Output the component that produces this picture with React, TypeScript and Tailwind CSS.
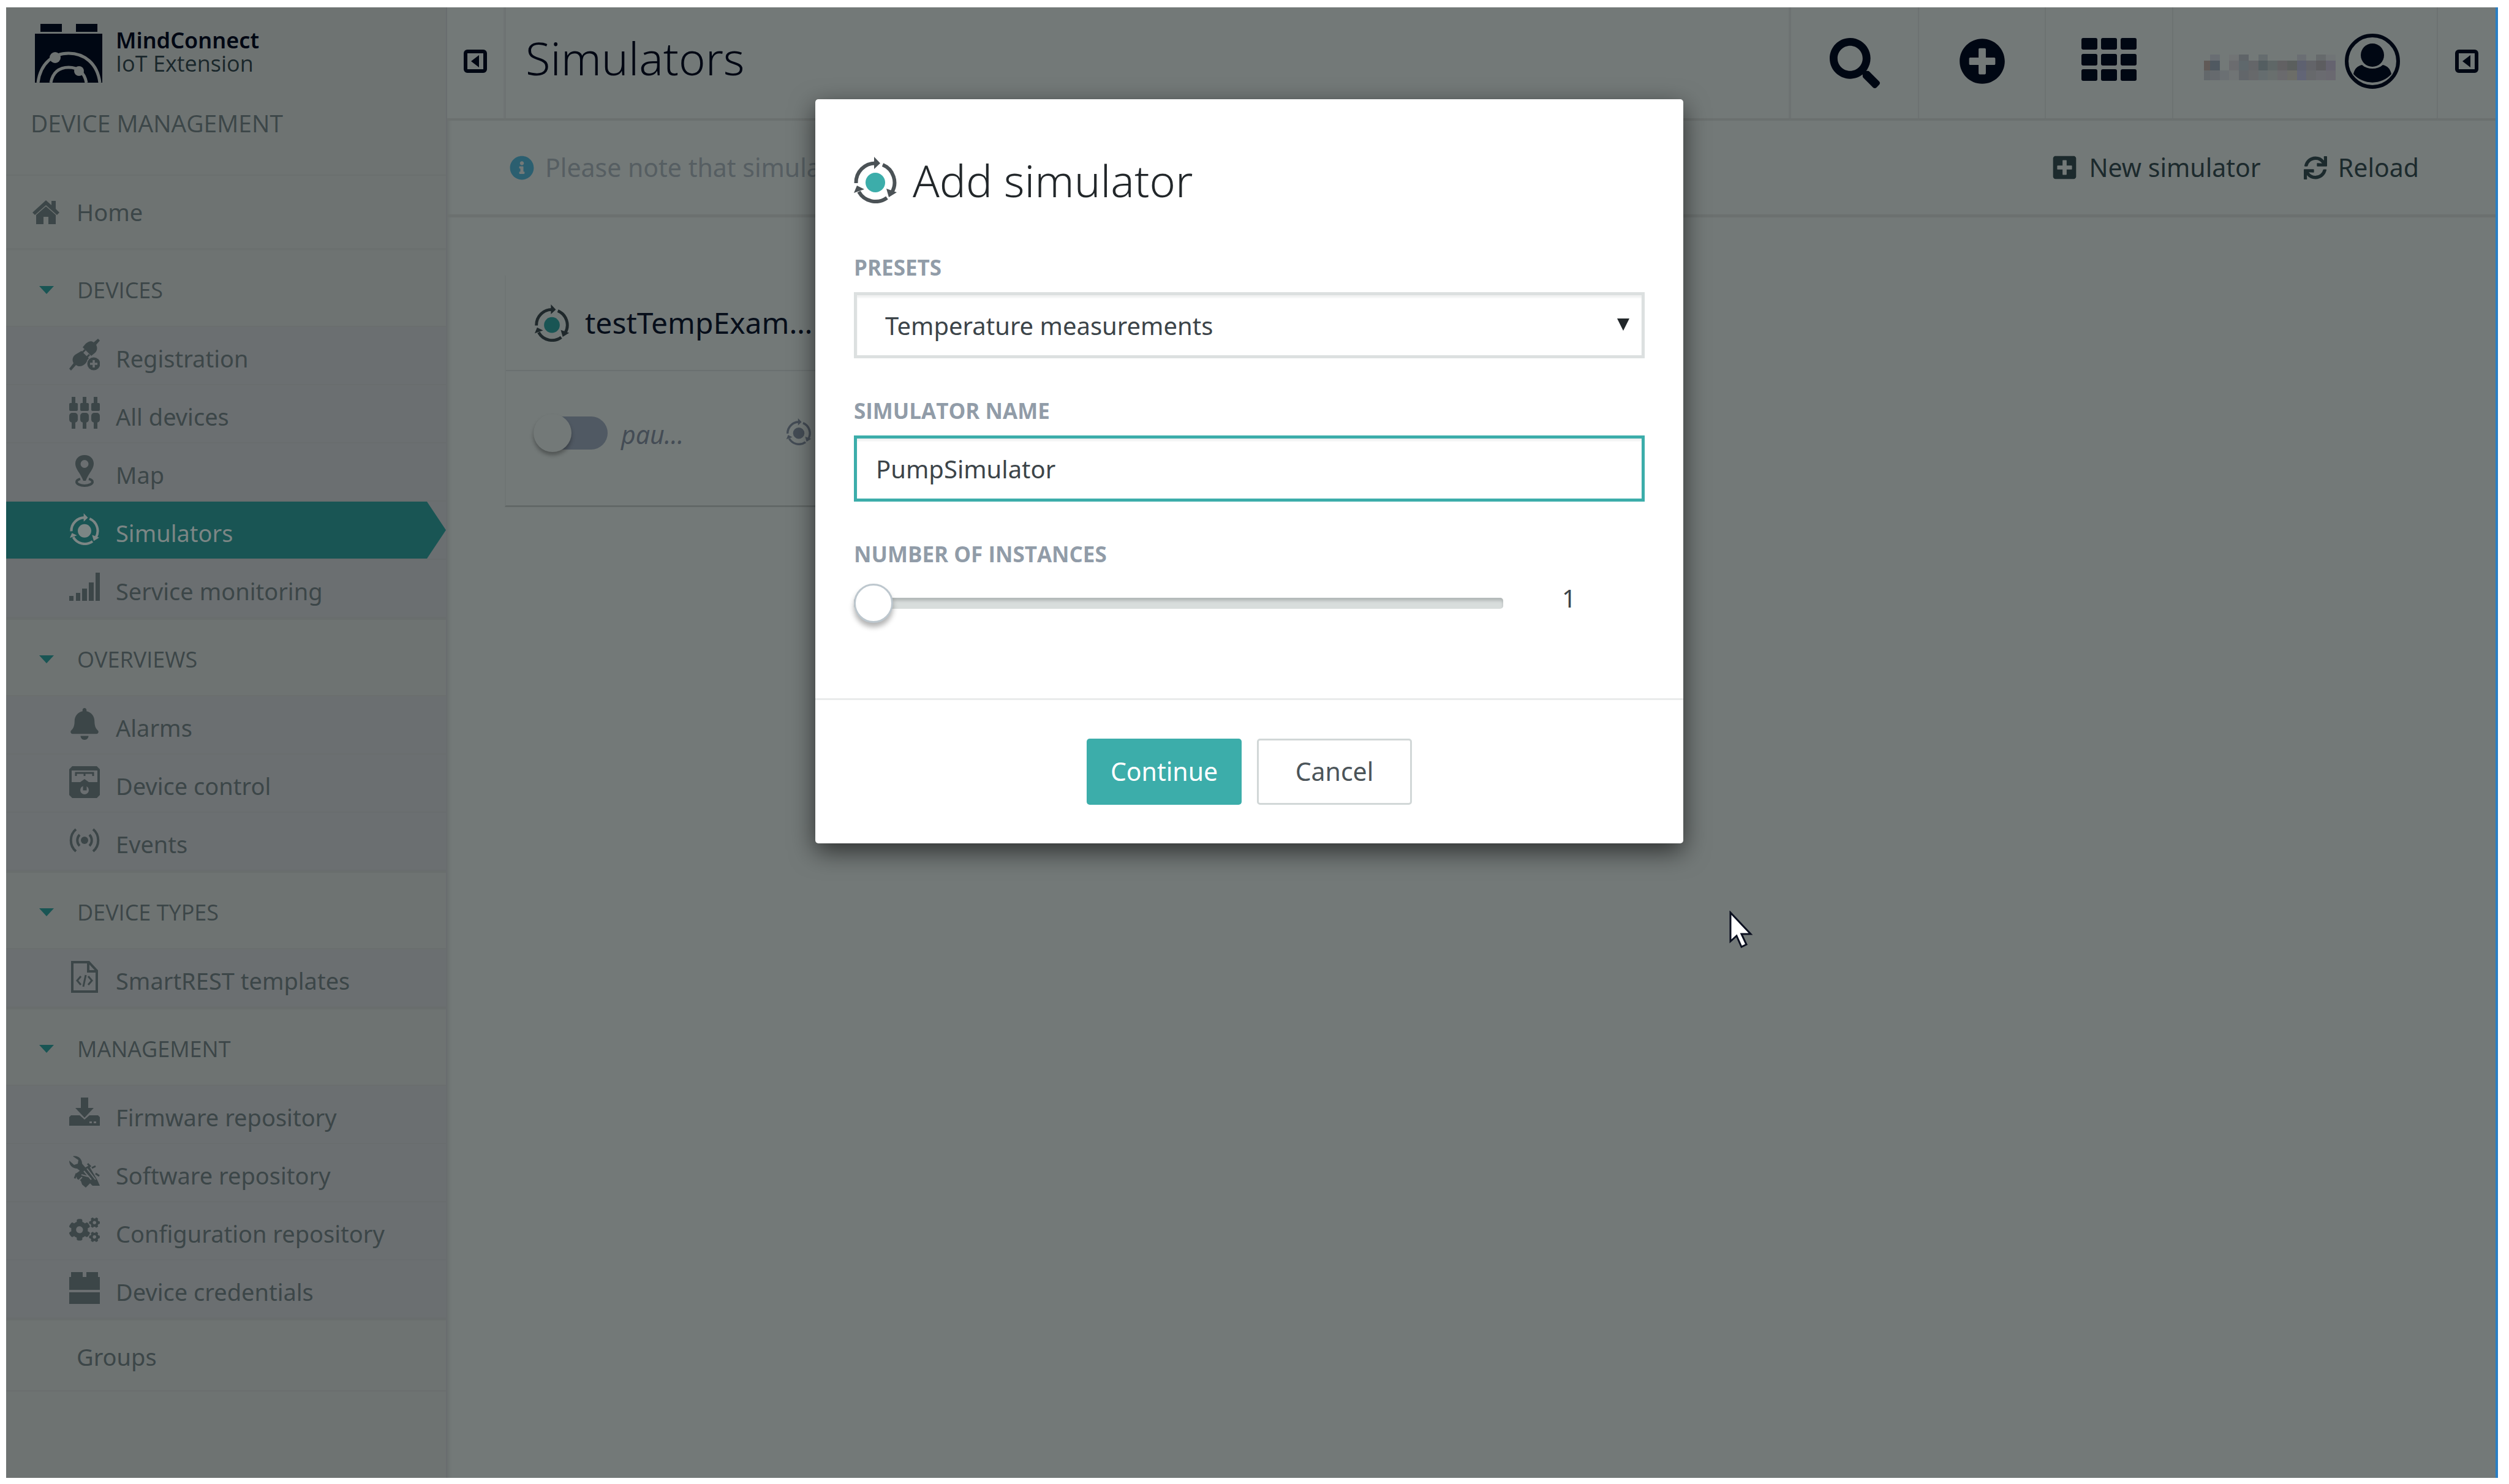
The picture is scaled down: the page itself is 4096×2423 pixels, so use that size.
import type { ReactNode } from "react";
import { FaBell, FaCogs, FaInfoCircle, FaPlusCircle, FaPlusSquare, FaSearch, FaSync } from "react-icons/fa";

type IconProps = { className?: string; dot?: string };

function SimulatorIcon({ className, dot = "currentColor" }: IconProps) {
  return (
    <svg viewBox="0 0 70 76" className={className} fill="none" aria-hidden="true">
      <g stroke="currentColor" strokeWidth="6">
        <path d="M3.5 43A31.500 31.500 0 0 1 36 10.500" />
        <path d="M47 13A31.500 31.500 0 0 1 62 58" />
        <path d="M54 67A31.500 31.500 0 0 1 8 57" />
      </g>
      <g fill="currentColor">
        <path d="M33 0L43 10.500L33 20Z" />
        <path d="M53 52L70 58L57 66Z" />
        <path d="M0 59L5 47L17 53Z" />
      </g>
      <circle cx="35" cy="42" r="16" fill={dot} />
    </svg>
  );
}

function HomeIcon() {
  return (
    <svg viewBox="0 0 46 40" className="h-10 w-[46px]" fill="currentColor" aria-hidden="true">
      <path d="M23 1L1 21l4 4L23 9l18 16 4-4-6-6V2h-7v7z" />
      <path d="M23 11L7 25v15h12V28h8v12h12V25z" />
    </svg>
  );
}

function RegistrationIcon() {
  return (
    <svg viewBox="0 0 50 52" className="size-full" fill="currentColor" aria-hidden="true">
      <path d="M47 0l3 3-6 7c3 6 1 11-3 14l-5 4L22 14l5-6c5-4 9-5 13-2z" />
      <path d="M20 20l13 13-7 8c-5 5-11 5-15 2l-8 9-3-3 7-9c-3-6-1-11 3-14z" />
      <path d="M20 24l6-6m1 14l6-6" stroke="currentColor" strokeWidth="3" />
      <circle cx="40" cy="41" r="12" fill="#6b6f71" />
      <circle cx="40" cy="41" r="10.500" />
      <path d="M40 35v12m-6-6h12" stroke="#6b6f71" strokeWidth="3.500" />
    </svg>
  );
}

function DevicesIcon() {
  return (
    <svg viewBox="0 0 50 52" className="size-full" fill="currentColor" aria-hidden="true">
      {[0, 18, 36].map((x) => (
        <g key={x}>
          <rect x={x + 4} width="6" height="12" />
          <rect x={x} y="10" width="14" height="13" rx="2" />
          <rect x={x} y="26" width="14" height="16" rx="5" />
          <rect x={x + 4} y="40" width="6" height="12" />
        </g>
      ))}
    </svg>
  );
}

function MapIcon() {
  return (
    <svg viewBox="0 0 50 52" className="size-full" fill="currentColor" aria-hidden="true">
      <path
        fillRule="evenodd"
        d="M25 0C16 0 10 6 10 14c0 9 8 15 13 28h4c5-13 13-19 13-28C40 6 34 0 25 0zm0 8a6 6 0 1 1 0 13a6 6 0 1 1 0-13z"
      />
      <path d="M18 39c-4 1-6 3-6 5 0 3 6 6 13 6s13-3 13-6c0-2-2-4-6-5" fill="none" stroke="currentColor" strokeWidth="4" />
    </svg>
  );
}

function SignalIcon() {
  return (
    <svg viewBox="0 0 50 52" className="size-full" fill="currentColor" aria-hidden="true">
      <rect y="40" width="7" height="8" />
      <rect x="11" y="35" width="7" height="13" />
      <rect x="21" y="28" width="8" height="20" />
      <rect x="32" y="18" width="8" height="30" />
      <rect x="43" y="2" width="7" height="46" />
    </svg>
  );
}

function ControlIcon() {
  return (
    <svg viewBox="0 0 50 52" className="size-full" fill="currentColor" aria-hidden="true">
      <path
        fillRule="evenodd"
        d="M5 0h40l5 5v42l-5 5H5l-5-5V5zM4 7v19h14l7-5 7 5h14V7zM25 32a7 7 0 1 0 0 14a7 7 0 1 0 0-14z"
      />
      <path d="M11 16v-5h28v5M25 11v5M24 30h3v8h-3z" fill="none" stroke="currentColor" strokeWidth="3" />
    </svg>
  );
}

function EventsIcon() {
  return (
    <svg viewBox="0 0 50 52" className="size-full" fill="none" stroke="currentColor" strokeWidth="4" aria-hidden="true">
      <circle cx="25" cy="26" r="6" fill="currentColor" stroke="none" />
      <path d="M17 17c-5 5-5 13 0 18M33 17c5 5 5 13 0 18M11 8C0 17 0 35 11 44M39 8c11 9 11 27 0 36" />
    </svg>
  );
}

function TemplateIcon() {
  return (
    <svg viewBox="0 0 50 52" className="size-full" fill="none" stroke="currentColor" strokeWidth="4" aria-hidden="true">
      <path d="M5 2h27l13 14v34H5zM31 2v15h14" />
      <path d="M19 25l-6 7 6 7M31 25l6 7-6 7M27 23l-4 19" strokeWidth="3" />
    </svg>
  );
}

function DownloadIcon() {
  return (
    <svg viewBox="0 0 50 52" className="size-full" fill="currentColor" aria-hidden="true">
      <path d="M19 0h12v17h9L25 33 10 17h9z" />
      <path fillRule="evenodd" d="M3 29h14l8 7 8-7h14l3 3v14H0V32zM33 39v3h4v-3zm7 0v3h4v-3z" />
    </svg>
  );
}

function SoftwareIcon() {
  return (
    <svg viewBox="0 0 50 52" className="size-full" fill="currentColor" aria-hidden="true">
      <path d="M6 1c8-2 15 4 15 12l6 7-8 6-6-5C6 21 0 16 0 8l8 7 6-2 1-6z" />
      <path d="M18 24l14-8 14 24 4 9H38l-4-4-7 7-6-5-2-6-6-3-3-8z" />
      <path d="M24 25l12 14M29 21l14 18M20 31l11 3M16 40l5-5" stroke="#6b6f71" strokeWidth="2" />
      <path d="M30 13l5 5M37 20l6-3M43 29l6 4M12 29l-3 8" stroke="currentColor" strokeWidth="3" />
    </svg>
  );
}

function CredentialsIcon() {
  return (
    <svg viewBox="0 0 50 52" className="size-full" fill="currentColor" aria-hidden="true">
      <path d="M3 0h19v8h6V0h19v8h3v21H0V8h3zM0 33h50v19H0z" />
    </svg>
  );
}

function PanelToggleIcon() {
  return (
    <svg viewBox="0 0 38 38" className="size-[38px]" aria-hidden="true">
      <rect x="3" y="3" width="32" height="32" rx="3" fill="none" stroke="currentColor" strokeWidth="6" />
      <path d="M25 9v20L12 19z" fill="currentColor" />
    </svg>
  );
}

function GridIcon() {
  return (
    <svg viewBox="0 0 90 70" className="h-[70px] w-[90px]" fill="currentColor" aria-hidden="true">
      {[0, 26, 51].map((y) => [0, 32, 64].map((x) => <rect key={x + "-" + y} x={x} y={y} width="26" height="19" rx="3" />))}
    </svg>
  );
}

function UserIcon() {
  return (
    <svg viewBox="0 0 90 90" className="size-[90px]" aria-hidden="true">
      <circle cx="45" cy="45" r="42" fill="none" stroke="currentColor" strokeWidth="6" />
      <ellipse cx="45" cy="35" rx="19" ry="19" fill="currentColor" />
      <path d="M28 51c9 8 25 8 34 0 8 2 12 6 14 15a42 42 0 0 1-62 0c2-9 6-13 14-15z" fill="currentColor" />
    </svg>
  );
}

const mosaicRows: { y: number; h: number; colors: string[] }[] = [
  {
    y: 0,
    h: 10,
    colors: ["", "#696e73", "", "#717475", "#5f6468", "", "#656c6e", "", "", "", "#6a6e73", "", "#666a6c", "#707476"],
  },
  {
    y: 10,
    h: 16,
    colors: [
      "#615a57", "#505961", "", "#6b6c6f", "#5f686c", "#646669", "#545e61", "#5f6767",
      "#626163", "#5b5f5e", "#5e6170", "#636469", "#5d5d60", "#65636f",
    ],
  },
  {
    y: 26,
    h: 16,
    colors: [
      "#63686b", "#666a6e", "#6b7073", "#707475", "#62666a", "#67696b", "#656d6f", "#696f6e",
      "#6a6a6d", "#6c6d68", "#626576", "#67696c", "#6a6b70", "#6a6970",
    ],
  },
];
const mosaicX = [0, 10, 26, 41, 57, 73, 89, 104, 120, 136, 152, 167, 183, 199, 215];

function MaskedName() {
  return (
    <svg viewBox="0 0 216 42" className="mt-3 h-[42px] w-[216px]" shapeRendering="crispEdges" aria-hidden="true">
      {mosaicRows.map((row) =>
        row.colors.map((c, i) =>
          c ? (
            <rect key={row.y + "-" + i} x={mosaicX[i]} y={row.y} width={mosaicX[i + 1] - mosaicX[i]} height={row.h} fill={c} />
          ) : null,
        ),
      )}
    </svg>
  );
}

function Logo() {
  return (
    <svg viewBox="0 0 110 96" className="h-24 w-[110px]" aria-hidden="true">
      <path d="M9 0h35v13H9zM67 0h35v13H67zM0 16h110v80H0z" fill="#000713" />
      <g fill="none" stroke="#6e7372" strokeWidth="5">
        <path d="M5 96C9 64 30 48 55 48s47 16 51 48" />
        <path d="M26 96c3-16 13-25 29-25s26 9 29 25" />
      </g>
      <circle cx="33" cy="55" r="9" fill="#6e7372" />
      <circle cx="72" cy="77" r="8" fill="#6e7372" />
      <path d="M35 96c2-10 9-15 20-15s18 5 21 15z" fill="#000713" />
    </svg>
  );
}

type Item = { label: string; icon: ReactNode; active?: boolean };

const sections: { title: string; items: Item[] }[] = [
  {
    title: "DEVICES",
    items: [
      { label: "Registration", icon: <RegistrationIcon /> },
      { label: "All devices", icon: <DevicesIcon /> },
      { label: "Map", icon: <MapIcon /> },
      { label: "Simulators", icon: <SimulatorIcon className="size-full" />, active: true },
      { label: "Service monitoring", icon: <SignalIcon /> },
    ],
  },
  {
    title: "OVERVIEWS",
    items: [
      { label: "Alarms", icon: <FaBell className="size-full" /> },
      { label: "Device control", icon: <ControlIcon /> },
      { label: "Events", icon: <EventsIcon /> },
    ],
  },
  { title: "DEVICE TYPES", items: [{ label: "SmartREST templates", icon: <TemplateIcon /> }] },
  {
    title: "MANAGEMENT",
    items: [
      { label: "Firmware repository", icon: <DownloadIcon /> },
      { label: "Software repository", icon: <SoftwareIcon /> },
      { label: "Configuration repository", icon: <FaCogs className="size-full" /> },
      { label: "Device credentials", icon: <CredentialsIcon /> },
    ],
  },
];

function Sidebar() {
  return (
    <aside className="w-[718px] shrink-0 bg-[#6e7372] text-[38px] text-[#3c4648]">
      <div className="h-[275px] border-b-2 border-[#6a6f6e] pt-[27px]">
        <div className="flex items-start gap-[22px] pl-[47px]">
          <Logo />
          <p className="flex flex-col pt-[8px] text-[36px] leading-[38px] text-[#000713]">
            <strong className="font-semibold">MindConnect</strong>
            <span className="font-['Open_Sans',sans-serif] text-[#1a272b]">IoT Extension</span>
          </p>
        </div>
        <p className="mt-10 pl-[40px] font-['Open_Sans',sans-serif] text-[39px] leading-[52px]">DEVICE MANAGEMENT</p>
      </div>
      <nav>
        <a href="#home" className="flex h-[122px] items-center border-b-4 border-[#6b706f] pl-[42px]">
          <HomeIcon />
          <span className="ml-[27px]">Home</span>
        </a>
        {sections.map((section) => (
          <section key={section.title}>
            <button
              type="button"
              className="flex h-[125px] w-full items-center border-b-2 border-[#6a6e6e] pt-[6px] pl-[54px] font-['Open_Sans',sans-serif] text-[36px]"
            >
              <svg viewBox="0 0 24 13" className="h-[13px] w-6" aria-hidden="true">
                <path d="M0 0h24L12 13z" fill="#195554" />
              </svg>
              <span className="ml-[38px]">{section.title}</span>
            </button>
            <ul className="border-b-3 border-[#696e6d] bg-[#6b6f71]">
              {section.items.map((item) => (
                <li key={item.label} className="h-[95px] border-b-2 border-[#696d6e]">
                  <a
                    href={"#" + item.label.toLowerCase().replace(/ /g, "-")}
                    className={
                      item.active
                        ? "flex h-full items-center bg-[#195554] pl-[103px] text-[#7c8685] [clip-path:polygon(0_0,687px_0,100%_50%,687px_100%,0_100%)]"
                        : "flex h-full items-center pl-[103px]"
                    }
                  >
                    <span className="mb-1 h-[52px] w-[50px] shrink-0">{item.icon}</span>
                    <span className="mt-[10px] ml-[26px]">{item.label}</span>
                  </a>
                </li>
              ))}
            </ul>
          </section>
        ))}
        <a href="#groups" className="flex h-[116px] items-center border-b-2 border-[#6a6e6e] pt-1 pl-[115px]">
          Groups
        </a>
      </nav>
    </aside>
  );
}

function HeaderBar() {
  return (
    <header className="flex h-[185px] border-b-4 border-[#6b706f] text-[#000713]">
      <button
        type="button"
        aria-label="Collapse navigator"
        className="flex w-[96px] justify-center border-r-4 border-[#6e7373] pt-[69px]"
      >
        <PanelToggleIcon />
      </button>
      <h1 className="flex-1 pl-[32px] text-[74px] leading-[166px] font-[350]">Simulators</h1>
      <button type="button" aria-label="Search" className="flex w-[211px] justify-center border-l-4 border-[#6d7272] pt-[50px]">
        <FaSearch className="size-[82px]" />
      </button>
      <button type="button" aria-label="Add" className="flex w-[207px] justify-center border-l-2 border-[#6d7272] pt-[50px]">
        <FaPlusCircle className="size-[76px]" />
      </button>
      <button type="button" aria-label="Applications" className="flex w-[208px] justify-center border-l-2 border-[#6d7272] pt-[50px]">
        <GridIcon />
      </button>
      <button type="button" aria-label="User" className="flex w-[432px] items-start border-l-2 border-[#6d7272] pt-[43px] pl-[50px]">
        <span className="mt-[22px] mr-[14px]">
          <MaskedName />
        </span>
        <UserIcon />
      </button>
      <button type="button" aria-label="Expand panel" className="flex w-[96px] justify-center border-l-2 border-[#6d7272] pt-[69px]">
        <PanelToggleIcon />
      </button>
    </header>
  );
}

function ActionBar() {
  return (
    <div className="flex h-[158px] items-center border-b-5 border-[#6b706f] pr-[125px] pl-[102px] text-[41px] text-[#1c2a2d]">
      <FaInfoCircle className="size-[40px] text-[#2b5f70]" />
      <p className="ml-[18px] flex-1 text-[#565e62]">Please note that simulators</p>
      <button type="button" className="flex items-center">
        <FaPlusSquare className="mr-[18px] size-[43px]" />
        New simulator
      </button>
      <button type="button" className="ml-[70px] flex items-center">
        <FaSync className="mr-[18px] size-[38px]" />
        Reload
      </button>
    </div>
  );
}

function SimulatorCard() {
  return (
    <article className="mt-[95px] ml-[94px] w-[1000px] border-b-3 border-l-2 border-b-[#626867] border-l-[#6f7574]">
      <h2 className="flex h-[156px] items-center border-b-2 border-[#6a7070] pl-[46px] text-[48px] text-[#070e1a]">
        <SimulatorIcon className="h-[61px] w-[58px] text-[#1f282b]" dot="#195554" />
        <span className="ml-[25px]">testTempExam…</span>
      </h2>
      <div className="flex h-[219px] items-start pt-[66px] pl-[46px] text-[41px] text-[#444c55]">
        <input
          type="checkbox"
          role="switch"
          aria-label="Simulator running"
          className="mt-[8px] flex h-[54px] w-[120px] appearance-none items-center rounded-full bg-[#505963] before:-ml-px before:size-[62px] before:rounded-full before:bg-[#737978] before:shadow-[0_5px_6px_rgba(0,0,0,0.3)]"
        />
        <span className="ml-[22px] w-[268px] leading-[74px] italic">pau…</span>
        <SimulatorIcon className="mt-[11px] size-[44px]" />
      </div>
    </article>
  );
}

const labelClass = "block h-[48px] font-['Open_Sans',sans-serif] text-[35px] leading-[48px] font-bold text-[#919ca8]";

function AddSimulatorDialog() {
  return (
    <form
      role="dialog"
      aria-labelledby="dialog-title"
      className="w-[1417px] rounded-[5px] bg-white text-[40px] text-[#3c4449] shadow-[0_13px_40px_rgba(0,0,0,0.6)]"
    >
      <div className="px-[63px] pt-[82px] pb-[123px]">
        <h2 id="dialog-title" className="flex h-[100px] items-center text-[72px] leading-[100px] font-[350] text-[#22272a]">
          <SimulatorIcon className="mr-[26px] h-[76px] w-[70px] text-[#4b5256]" dot="#3cadaa" />
          Add simulator
        </h2>
        <label htmlFor="preset" className={labelClass + " mt-[69px]"}>
          PRESETS
        </label>
        <div className="relative mt-4">
          <select
            id="preset"
            className="h-[108px] w-full appearance-none border-5 border-[#dce0e0] bg-white pt-[2px] pl-[46px] shadow-[inset_0_4px_3px_#f0f1f1]"
          >
            <option>Temperature measurements</option>
          </select>
          <svg viewBox="0 0 20 20" className="pointer-events-none absolute top-[43px] right-[25px] size-[20px]" aria-hidden="true">
            <path d="M0 0h20L10 20z" fill="#22272a" />
          </svg>
        </div>
        <label htmlFor="name" className={labelClass + " mt-[62px]"}>
          SIMULATOR NAME
        </label>
        <input
          id="name"
          type="text"
          defaultValue="PumpSimulator"
          className="mt-4 block h-[108px] w-full border-5 border-[#3cadaa] bg-white pl-[31px] shadow-[inset_0_4px_3px_#f0f1f1] outline-none"
        />
        <label htmlFor="instances" className={labelClass + " mt-[62px]"}>
          NUMBER OF INSTANCES
        </label>
        <div className="mt-6 flex h-16 items-start">
          <input
            id="instances"
            type="range"
            min={1}
            max={10}
            defaultValue={1}
            className="h-16 w-[1060px] appearance-none bg-transparent [&::-webkit-slider-runnable-track]:h-[18px] [&::-webkit-slider-runnable-track]:rounded-[5px] [&::-webkit-slider-runnable-track]:bg-[#d8dddc] [&::-webkit-slider-runnable-track]:shadow-[inset_0_5px_4px_#b4b9b9] [&::-webkit-slider-thumb]:-mt-[23px] [&::-webkit-slider-thumb]:size-16 [&::-webkit-slider-thumb]:appearance-none [&::-webkit-slider-thumb]:rounded-full [&::-webkit-slider-thumb]:border-3 [&::-webkit-slider-thumb]:border-[#bdc7ce] [&::-webkit-slider-thumb]:bg-white [&::-webkit-slider-thumb]:shadow-[0_7px_8px_rgba(0,0,0,0.3)]"
          />
          <output htmlFor="instances" className="ml-[96px] leading-[48px]">
            1
          </output>
        </div>
      </div>
      <div className="flex justify-center gap-[25px] border-t-3 border-[#e9ebeb] py-[63px]">
        <button type="button" className="h-[108px] w-[253px] rounded-[5px] bg-[#3cadaa] text-[41px] text-white">
          Continue
        </button>
        <button type="button" className="h-[108px] w-[253px] rounded-[5px] border-3 border-[#d1d7d7] bg-white text-[41px] text-[#4b5459]">
          Cancel
        </button>
      </div>
    </form>
  );
}

export default function App() {
  return (
    <div className="relative flex min-h-screen bg-white pt-3 pr-[18px] pb-[10px] pl-[10px] font-['Noto_Sans',sans-serif]">
      <div className="flex flex-1 border-r-4 border-[#2a7fc4] bg-[#737978]">
        <Sidebar />
        <main className="flex flex-1 flex-col border-l-2 border-[#696d6f]">
          <HeaderBar />
          <div className="flex-1 shadow-[inset_7px_0_6px_-5px_rgba(0,0,0,0.1)]">
            <ActionBar />
            <SimulatorCard />
          </div>
        </main>
      </div>
      <div className="absolute inset-x-0 top-[162px] flex justify-center pr-[17px]">
        <AddSimulatorDialog />
      </div>
      <svg viewBox="0 0 40 62" className="absolute top-[1487px] left-[2823px] h-[62px] w-10" aria-hidden="true">
        <path d="M2 3v47l10-9 8 18 8-4-8-17h15z" fill="#fff" stroke="#0b1020" strokeWidth="3" />
      </svg>
    </div>
  );
}
